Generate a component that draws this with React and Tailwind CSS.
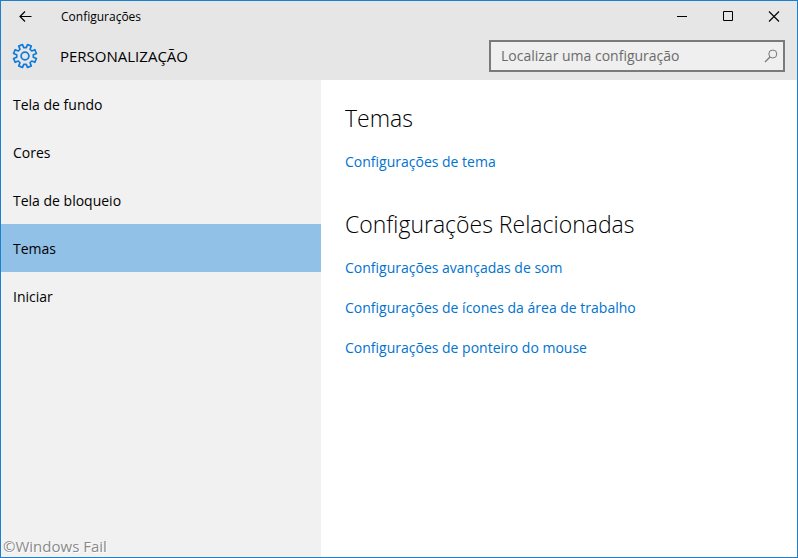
import React, { useState } from "react";

const sections = [
  "Tela de fundo",
  "Cores",
  "Tela de bloqueio",
  "Temas",
  "Iniciar",
];

const relatedLinks = [
  "Configurações avançadas de som",
  "Configurações de ícones da área de trabalho",
  "Configurações de ponteiro do mouse",
];

// Outline of an eight-toothed gear around (13, 13)
const gearPoints = Array.from({ length: 8 }, (_, i) => {
  const mid = 22.5 + i * 45;
  return [
    [mid - 14, 8.4],
    [mid - 10, 11.7],
    [mid + 10, 11.7],
    [mid + 14, 8.4],
  ]
    .map(([deg, r]) => {
      const a = (deg * Math.PI) / 180;
      return `${(13 + r * Math.cos(a)).toFixed(2)},${(
        13 +
        r * Math.sin(a)
      ).toFixed(2)}`;
    })
    .join(" ");
}).join(" ");

const GearIcon = () => (
  <svg
    width="26"
    height="26"
    viewBox="0 0 26 26"
    fill="none"
    stroke="#0f7bd7"
    strokeWidth="1.7"
    strokeLinejoin="round"
    aria-hidden="true"
  >
    <polygon points={gearPoints} />
    <circle cx="13" cy="13" r="3.9" />
  </svg>
);

const TitleBar = () => (
  <div className="flex h-[31px] items-center">
    <button aria-label="Voltar" className="flex h-full w-12 items-center justify-center">
      <svg width="14" height="12" viewBox="0 0 14 12" fill="none" stroke="#000" strokeWidth="1.2">
        <path d="M13.5 5.5H2M7 .5l-5 5 5 5" />
      </svg>
    </button>
    <span className="ml-3 flex-1 text-xs">Configurações</span>
    <button aria-label="Minimizar" className="flex h-full w-[46px] items-center justify-center">
      <svg width="10" height="11" viewBox="0 0 10 11" stroke="#000">
        <path d="M0 5.5h10" />
      </svg>
    </button>
    <button aria-label="Maximizar" className="flex h-full w-[46px] items-center justify-center">
      <svg width="10" height="11" viewBox="0 0 10 11" fill="none" stroke="#000">
        <path d="M.5 .5h9v9h-9z" />
      </svg>
    </button>
    <button aria-label="Fechar" className="flex h-full w-[46px] items-center justify-center">
      <svg width="12" height="11" viewBox="0 0 12 11" stroke="#000" strokeWidth="1.1">
        <path d="M1 .5l10 10M11 .5l-10 10" />
      </svg>
    </button>
  </div>
);

const Header = () => (
  <div className="flex h-12 items-center pr-3 pl-[11px]">
    <GearIcon />
    <h1 className="ml-[22px] flex-1 text-[15px] font-medium">PERSONALIZAÇÃO</h1>
    <label className="flex h-8 w-[296px] items-center border-2 border-[#7a7a7a] bg-[#efefef] pr-[5px] pl-2.5">
      <input
        type="text"
        aria-label="Localizar uma configuração"
        placeholder="Localizar uma configuração"
        className="min-w-0 flex-1 bg-transparent text-sm outline-none placeholder:text-[#6b6b6b]"
      />
      <svg width="14" height="14" viewBox="0 0 14 14" fill="none" stroke="#777" aria-hidden="true">
        <circle cx="8.8" cy="5" r="4" />
        <path d="M6 8L1 13" strokeWidth="1.2" />
      </svg>
    </label>
  </div>
);

const SettingLink = ({ children }) => (
  <a href="#" className="text-sm leading-5 text-[#0073cf] hover:text-gray-500">
    {children}
  </a>
);

const App = () => {
  const [selected, setSelected] = useState("Temas");

  return (
    <div className="relative flex min-h-screen flex-col border border-[#1a80d2] bg-white font-['Open_Sans','Noto_Sans',sans-serif] text-black">
      <header className="bg-[#e6e6e6]">
        <TitleBar />
        <Header />
      </header>

      <div className="flex flex-1">
        {/* Sidebar */}
        <nav className="w-80 shrink-0 bg-[#f1f1f1]">
          {sections.map((name) => (
            <button
              key={name}
              onClick={() => setSelected(name)}
              className={`block h-12 w-full px-3 pt-0.5 text-left text-sm ${
                selected === name ? "bg-[#91c1e7]" : "hover:bg-gray-200"
              }`}
            >
              {name}
            </button>
          ))}
        </nav>

        {/* Content */}
        <main className="flex-1 px-6 pt-[22px]">
          <section>
            <h2 className="text-[23px] leading-8 font-light">Temas</h2>
            <div className="mt-[18px] flex flex-col items-start">
              <SettingLink>Configurações de tema</SettingLink>
            </div>
          </section>
          <section className="mt-9">
            <h2 className="text-[23px] leading-8 font-light">
              Configurações Relacionadas
            </h2>
            <div className="mt-[18px] flex flex-col items-start gap-5">
              {relatedLinks.map((text) => (
                <SettingLink key={text}>{text}</SettingLink>
              ))}
            </div>
          </section>
        </main>
      </div>

      <span className="absolute bottom-0 left-0.5 font-['Comic_Sans_MS','Open_Sans',sans-serif] text-[15px] text-[#8a8a8a] [text-shadow:1px_1px_0_#fff]">
        ©Windows Fail
      </span>
    </div>
  );
};

export default App;
